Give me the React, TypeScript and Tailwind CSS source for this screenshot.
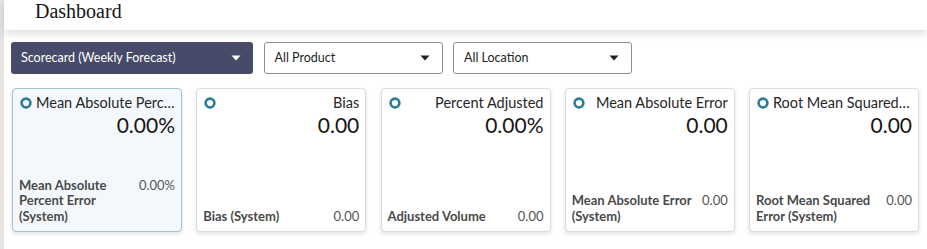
type Card = {
  title: string;
  value: string;
  label: string;
  sub: string;
  active?: boolean;
};

const CARDS: Card[] = [
  { title: "Mean Absolute Percent Error", value: "0.00%", label: "Mean Absolute Percent Error (System)", sub: "0.00%", active: true },
  { title: "Bias", value: "0.00", label: "Bias (System)", sub: "0.00" },
  { title: "Percent Adjusted", value: "0.00%", label: "Adjusted Volume", sub: "0.00" },
  { title: "Mean Absolute Error", value: "0.00", label: "Mean Absolute Error (System)", sub: "0.00" },
  { title: "Root Mean Squared Error", value: "0.00", label: "Root Mean Squared Error (System)", sub: "0.00" },
];

const Caret = ({ light }: { light?: boolean }) => (
  <svg width="10" height="6" viewBox="0 0 10 6" className="shrink-0">
    <path d="M0.5 0.5 L9.5 0.5 L5 5.5 Z" fill={light ? "#ffffff" : "#1f1f1f"} />
  </svg>
);

const Ring = () => (
  <svg width="12" height="12" viewBox="0 0 12 12" className="shrink-0">
    <circle cx="6" cy="6" r="4.4" fill="none" stroke="#2b7e96" strokeWidth="2.6" />
  </svg>
);

const Select = ({ label, dark, width }: { label: string; dark?: boolean; width: string }) => (
  <div
    className={`flex h-[32px] items-center justify-between rounded-[3px] pl-[10px] pr-[12px] text-[12.5px] ${width} ${
      dark ? "bg-[#474b69] text-white" : "border border-[#8d8d8d] bg-white text-[#1f1f1f]"
    }`}
  >
    <span>{label}</span>
    <Caret light={dark} />
  </div>
);

export default function App() {
  return (
    <div className="flex h-[249px] w-[927px] overflow-hidden bg-white font-['Lato',sans-serif]">
      <div className="w-[4px] shrink-0 bg-[#e6e4e1]" />
      <div className="flex min-w-0 flex-1 flex-col">
        {/* header */}
        <div className="relative z-10 h-[30px] bg-white pl-[31px] shadow-[0_3px_10px_rgba(0,0,0,0.15)]">
          <h1 className="font-['Liberation_Serif',serif] text-[20px] leading-[22px] text-[#161513]">Dashboard</h1>
        </div>

        {/* filters */}
        <div className="mt-[12px] flex gap-[10.5px] pl-[7px]">
          <Select label="Scorecard (Weekly Forecast)" dark width="w-[242px]" />
          <Select label="All Product" width="w-[179px]" />
          <Select label="All Location" width="w-[179px]" />
        </div>

        {/* cards */}
        <div className="mt-[14px] flex gap-[14.25px] pl-[8px]">
          {CARDS.map((c) => (
            <div
              key={c.title}
              className={`flex h-[144px] w-[170px] shrink-0 flex-col rounded-[4px] border px-[6px] pb-[7px] pt-[4px] shadow-[0_2px_4px_rgba(0,0,0,0.12)] ${
                c.active ? "border-[#a9bfca] bg-[#f4f8fc]" : "border-[#d6dde2] bg-white"
              }`}
            >
              <div className="flex items-center gap-[4px] pl-[1px]">
                <Ring />
                <div className="min-w-0 flex-1 truncate text-right text-[14.5px] leading-[20px] text-[#262626]">{c.title}</div>
              </div>
              <div className="text-right text-[21px] leading-[24px] text-[#161513]">{c.value}</div>
              <div className="mt-auto flex items-start justify-between gap-[8px] text-[13px] leading-[15.5px]">
                <span className="font-bold text-[#4a4a4a]">{c.label}</span>
                <span className="shrink-0 text-[#555]">{c.sub}</span>
              </div>
            </div>
          ))}
        </div>
      </div>
    </div>
  );
}
